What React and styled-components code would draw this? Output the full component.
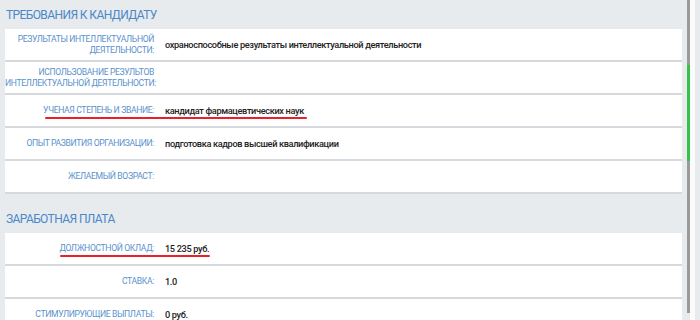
import React from "react";
import styled, { createGlobalStyle } from "styled-components";

const Global = createGlobalStyle`
  html, body { margin: 0; padding: 0; }
  body {
    background: #e8ebee;
    font-family: Roboto, "Noto Sans", "Liberation Sans", sans-serif;
    overflow: hidden;
  }
`;

const Page = styled.div`
  display: flex;
  height: 320px;
  width: 700px;
`;

const Content = styled.main`
  width: 677px;
  margin-left: 5px;
  display: flex;
  flex-direction: column;
  gap: 10px;
`;

const Section = styled.section`
  display: flex;
  flex-direction: column;
`;

const SectionTitle = styled.h2`
  margin: 0;
  height: 29px;
  display: flex;
  align-items: center;
  padding-left: 1px;
  font-size: 12px;
  font-weight: 400;
  color: #4a88c7;
  text-transform: uppercase;
  letter-spacing: -0.6px;
`;

const Row = styled.div`
  position: relative;
  display: grid;
  grid-template-columns: 149px 1fr;
  column-gap: 11px;
  align-items: center;
  height: 31px;
  background: #fff;
  border-bottom: 2px solid #d6dade;
  &::after {
    content: "";
    display: ${(p) => (p.$mark ? "block" : "none")};
    position: absolute;
    left: ${(p) => p.$markLeft || 0}px;
    width: ${(p) => p.$markWidth || 0}px;
    top: 22px;
    height: 2px;
    background: #e8202a;
    border-radius: 1px;
  }
`;

const Label = styled.div`
  text-align: right;
  font-size: 8.6px;
  font-weight: 400;
  line-height: 11px;
  letter-spacing: -0.35px;
  white-space: nowrap;
  color: #5a92cc;
  text-transform: uppercase;
`;

const Value = styled.div`
  font-size: 9.2px;
  font-weight: 500;
  letter-spacing: -0.35px;
  color: #222;
`;

const ScrollTrack = styled.div`
  margin-left: 5px;
  width: 3px;
  height: 313px;
  background: #9a9a9a;
  display: flex;
  flex-direction: column;
`;

const ScrollThumb = styled.div`
  margin-top: 65px;
  height: 96px;
  background: #35c24a;
`;

const Gutter = styled.div`
  width: 5px;
  background: #fbfbfc;
`;

const req = [
  { l: <>Результаты интеллектуальной<br />деятельности:</>, v: "охраноспособные результаты интеллектуальной деятельности" },
  { l: <>Использование результов<br />интеллектуальной деятельности:</>, v: "" },
  { l: "Ученая степень и звание:", v: "кандидат фармацевтических наук", mark: [40, 262] },
  { l: "Опыт развития организации:", v: "подготовка кадров высшей квалификации" },
  { l: "Желаемый возраст:", v: "" },
];

const pay = [
  { l: "Должностной оклад:", v: "15 235 руб.", mark: [55, 150] },
  { l: "Ставка:", v: "1.0" },
  { l: "Стимулирующие выплаты:", v: "0 руб." },
];

const Rows = ({ items }) =>
  items.map((r, i) => (
    <Row key={i} $mark={!!r.mark} $markLeft={r.mark?.[0]} $markWidth={r.mark?.[1]}>
      <Label>{r.l}</Label>
      <Value>{r.v}</Value>
    </Row>
  ));

export default function App() {
  return (
    <>
      <Global />
      <Page>
        <Content>
          <Section>
            <SectionTitle>Требования к кандидату</SectionTitle>
            <Rows items={req} />
          </Section>
          <Section>
            <SectionTitle>Заработная плата</SectionTitle>
            <Rows items={pay} />
          </Section>
        </Content>
        <ScrollTrack>
          <ScrollThumb />
        </ScrollTrack>
        <Gutter />
      </Page>
    </>
  );
}
